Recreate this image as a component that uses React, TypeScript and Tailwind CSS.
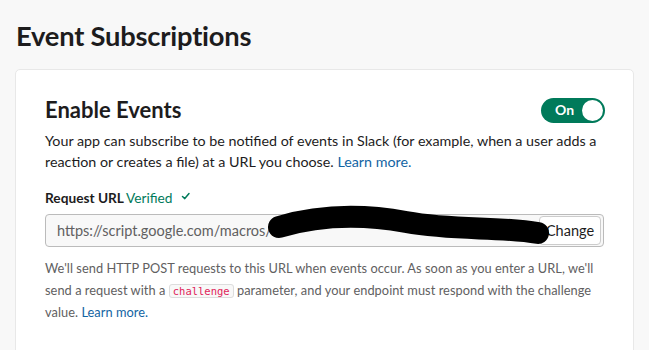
export default function App() {
  return (
    <div className="min-h-screen bg-[#f8f8f8] font-['Lato','Liberation_Sans',sans-serif] text-[#1d1c1d] px-[15px] pt-[18px]">
      <h1 className="text-[27.3px] font-bold leading-[36px] tracking-[-0.2px] pl-[1px]">Event Subscriptions</h1>

      <div className="mt-[15px] w-[619px] bg-white border border-[#e8e8e8] rounded-[5px] px-[29px] pt-[25px] pb-10">
        {/* Header */}
        <div className="flex items-center justify-between">
          <h2 className="text-[22px] font-bold leading-[30px]">Enable Events</h2>
          <div className="flex items-center h-[25px] w-[64px] rounded-full bg-[#007a5a] pl-[14px] pr-[2px] mr-[-1px]">
            <span className="text-white text-[14px] font-bold leading-none">On</span>
            <span className="ml-auto h-[21px] w-[21px] rounded-full bg-white"></span>
          </div>
        </div>

        <p className="mt-[5px] text-[14.3px] leading-[21px]">
          Your app can subscribe to be notified of events in Slack (for example, when a user adds a reaction or creates a file) at a URL you choose.{" "}
          <a className="text-[#1264a3]">Learn more.</a>
        </p>

        {/* Request URL */}
        <div className="mt-[15px] flex items-center gap-[2px] text-[13.7px] leading-[22px]">
          <span className="font-bold">Request URL</span>
          <span className="text-[#007a5a]">Verified</span>
          <svg width="14" height="14" viewBox="0 0 14 14" className="ml-[5px] -mt-[5px]" fill="none">
            <path d="M3.5 7.5 L5.8 9.6 L10 4.6" stroke="#007a5a" strokeWidth="1.5" strokeLinecap="round" strokeLinejoin="round" />
          </svg>
        </div>

        <div className="relative mt-[5px] flex items-center h-[33px] rounded-[4px] border border-[#bbbbbb] bg-[#f8f8f8] pl-[11px] pr-[2px]">
          <span className="flex-1 text-[14.5px] text-[#616061]">https://script.google.com/macros/s</span>
          <button className="h-[29px] w-[62px] rounded-[4px] border border-[#cccccc] bg-white text-[14.5px] text-[#1d1c1d]">Change</button>
          {/* redaction scribble */}
          <svg className="absolute left-[220px] top-[-12px]" width="300" height="50" viewBox="0 0 300 50" fill="none">
            <path d="M13 24 C 50 13, 90 10, 140 19 S 230 23, 272 30" stroke="#000" strokeWidth="22" strokeLinecap="round" />
          </svg>
        </div>

        <p className="mt-[10px] text-[12.8px] tracking-[0.05px] leading-[22px] text-[#616061]">
          We'll send HTTP POST requests to this URL when events occur. As soon as you enter a URL, we'll send a request with a{" "}
          <code className="font-['DejaVu_Sans_Mono',monospace] text-[10.5px] leading-none tracking-normal text-[#e01e5a] bg-[#f8f8f8] border border-[#dddddd] rounded-[3px] px-[3px] py-0">challenge</code>{" "}
          parameter, and your endpoint must respond with the challenge value.{" "}
          <a className="text-[#1264a3]">Learn more.</a>
        </p>
      </div>
    </div>
  );
}
